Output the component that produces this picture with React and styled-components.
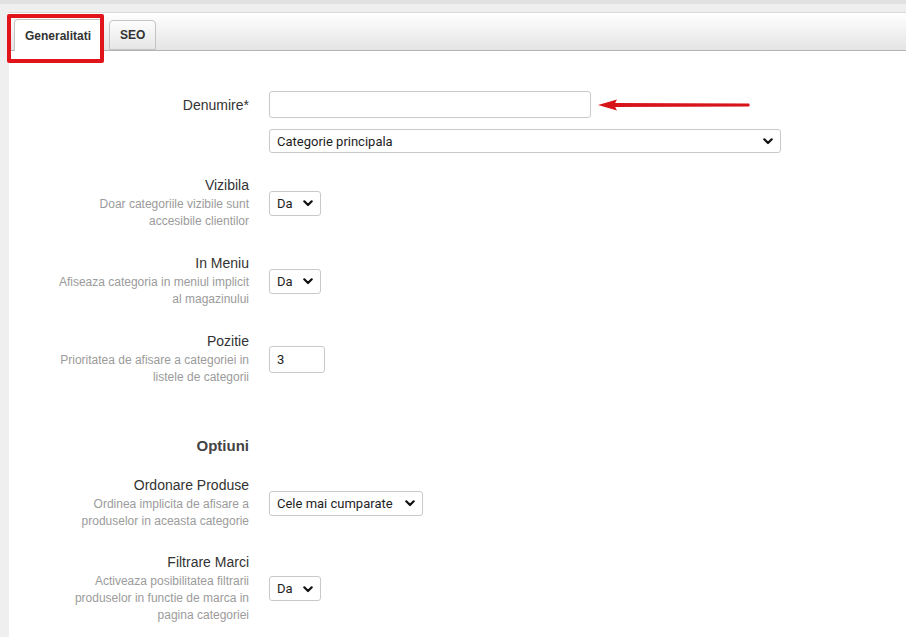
import React from "react";
import styled, { createGlobalStyle } from "styled-components";

const Global = createGlobalStyle`
  html, body { margin: 0; padding: 0; }
  body {
    background: #ececec;
    font-family: "Liberation Sans", Arial, sans-serif;
    color: #333;
  }
  * { box-sizing: border-box; }
`;

const Page = styled.div`
  position: relative;
  min-height: 637px;
  border-top: 4px solid #e1e1e1;
  padding: 8px 0 0 9px;
  background: #efefef;
  overflow: hidden;
`;

const Panel = styled.div`
  background: #fff;
  border-top: 1px solid #d9d9d9;
  min-height: 620px;
`;

const TabBar = styled.div`
  display: flex;
  align-items: flex-end;
  gap: 7px;
  height: 38px;
  padding-left: 5px;
  background: linear-gradient(#ffffff, #e4e4e4);
  border-bottom: 1px solid #b4b4b4;
`;

const Tab = styled.div`
  display: flex;
  align-items: center;
  justify-content: center;
  height: ${(p) => (p.$active ? 32 : 30)}px;
  padding: 0 10px;
  margin-bottom: ${(p) => (p.$active ? -1 : 0)}px;
  border: 1px solid #c4c4c4;
  border-bottom: ${(p) => (p.$active ? "none" : "1px solid #c4c4c4")};
  border-radius: 4px 4px 0 0;
  background: ${(p) => (p.$active ? "#fff" : "linear-gradient(#fdfdfd, #e6e6e6)")};
  font-weight: bold;
  font-size: 12px;
  color: #333;
`;

const FormBody = styled.div`
  display: flex;
  flex-direction: column;
  padding: 40px 0 30px 46px;
`;

const Row = styled.div`
  display: grid;
  grid-template-columns: 194px 1fr;
  column-gap: 20px;
  align-items: center;
  margin-top: ${(p) => p.$mt || 0}px;
`;

const LabelCol = styled.div`
  text-align: right;
`;

const Title = styled.div`
  font-size: 14px;
  line-height: 18px;
  color: #333;
`;

const Desc = styled.div`
  margin-top: 2px;
  font-size: 12px;
  line-height: 17px;
  color: #9b9b9b;
  span { display: block; white-space: nowrap; }
`;

const Heading = styled.div`
  font-size: 15px;
  font-weight: bold;
  line-height: 20px;
  color: #444;
  text-align: right;
`;

const TextInput = styled.input`
  width: ${(p) => p.$w}px;
  height: 27px;
  border: 1px solid #c9c9c9;
  border-radius: 3px;
  padding: 0 7px;
  font-family: Roboto, Arial, sans-serif;
  font-size: 13px;
  color: #222;
  background: #fff;
  outline: none;
`;

const SelectWrap = styled.div`
  position: relative;
  width: ${(p) => p.$w}px;
  height: ${(p) => p.$h || 25}px;
`;

const SelectBox = styled.select`
  appearance: none;
  -webkit-appearance: none;
  width: 100%;
  height: 100%;
  border: 1px solid #c9c9c9;
  border-radius: 3px;
  padding: 0 20px 0 7px;
  font-family: Roboto, Arial, sans-serif;
  font-size: 13px;
  color: #1e1e1e;
  background: #fff;
  outline: none;
`;

const Chevron = styled.svg`
  position: absolute;
  right: 8px;
  top: 50%;
  margin-top: -3px;
  pointer-events: none;
`;

const Highlight = styled.div`
  position: absolute;
  left: 7px;
  top: 10px;
  width: 97px;
  height: 49px;
  border: 4px solid #e1141c;
  border-radius: 2px;
`;

const ArrowSvg = styled.svg`
  position: absolute;
  left: 596px;
  top: 93px;
`;

function Select({ w, h, value }) {
  return (
    <SelectWrap $w={w} $h={h}>
      <SelectBox defaultValue={value}>
        <option>{value}</option>
      </SelectBox>
      <Chevron width="10" height="7" viewBox="0 0 10 7">
        <path d="M1.3 1.3 L5 5 L8.7 1.3" fill="none" stroke="#111" strokeWidth="2.2" strokeLinecap="round" strokeLinejoin="round" />
      </Chevron>
    </SelectWrap>
  );
}

function Label({ title, lines }) {
  return (
    <LabelCol>
      <Title>{title}</Title>
      {lines && (
        <Desc>
          {lines.map((l) => (
            <span key={l}>{l}</span>
          ))}
        </Desc>
      )}
    </LabelCol>
  );
}

export default function App() {
  return (
    <>
      <Global />
      <Page>
        <Panel>
          <TabBar>
            <Tab $active>Generalitati</Tab>
            <Tab>SEO</Tab>
          </TabBar>
          <FormBody>
            <Row>
              <Label title="Denumire*" />
              <TextInput $w={322} />
            </Row>
            <Row $mt={11}>
              <div />
              <Select w={512} h={24} value="Categorie principala" />
            </Row>
            <Row $mt={23}>
              <Label title="Vizibila" lines={["Doar categoriile vizibile sunt", "accesibile clientilor"]} />
              <Select w={52} value="Da" />
            </Row>
            <Row $mt={24}>
              <Label title="In Meniu" lines={["Afiseaza categoria in meniul implicit", "al magazinului"]} />
              <Select w={52} value="Da" />
            </Row>
            <Row $mt={24}>
              <Label title="Pozitie" lines={["Prioritatea de afisare a categoriei in", "listele de categorii"]} />
              <TextInput $w={56} defaultValue="3" />
            </Row>
            <Row $mt={50}>
              <Heading>Optiuni</Heading>
              <div />
            </Row>
            <Row $mt={20}>
              <Label title="Ordonare Produse" lines={["Ordinea implicita de afisare a", "produselor in aceasta categorie"]} />
              <Select w={154} value="Cele mai cumparate" />
            </Row>
            <Row $mt={23}>
              <Label title="Filtrare Marci" lines={["Activeaza posibilitatea filtrarii", "produselor in functie de marca in", "pagina categoriei"]} />
              <Select w={52} value="Da" />
            </Row>
          </FormBody>
        </Panel>
        <Highlight />
        <ArrowSvg width="156" height="16" viewBox="0 0 156 16">
          <path d="M18 6 L153 6.4 Q154.5 8 153 9.6 L18 10 Z" fill="#d8141b" />
          <path d="M2 8 L21 2.5 L18 8 L21 13.5 Z" fill="#d8141b" />
        </ArrowSvg>
      </Page>
    </>
  );
}
